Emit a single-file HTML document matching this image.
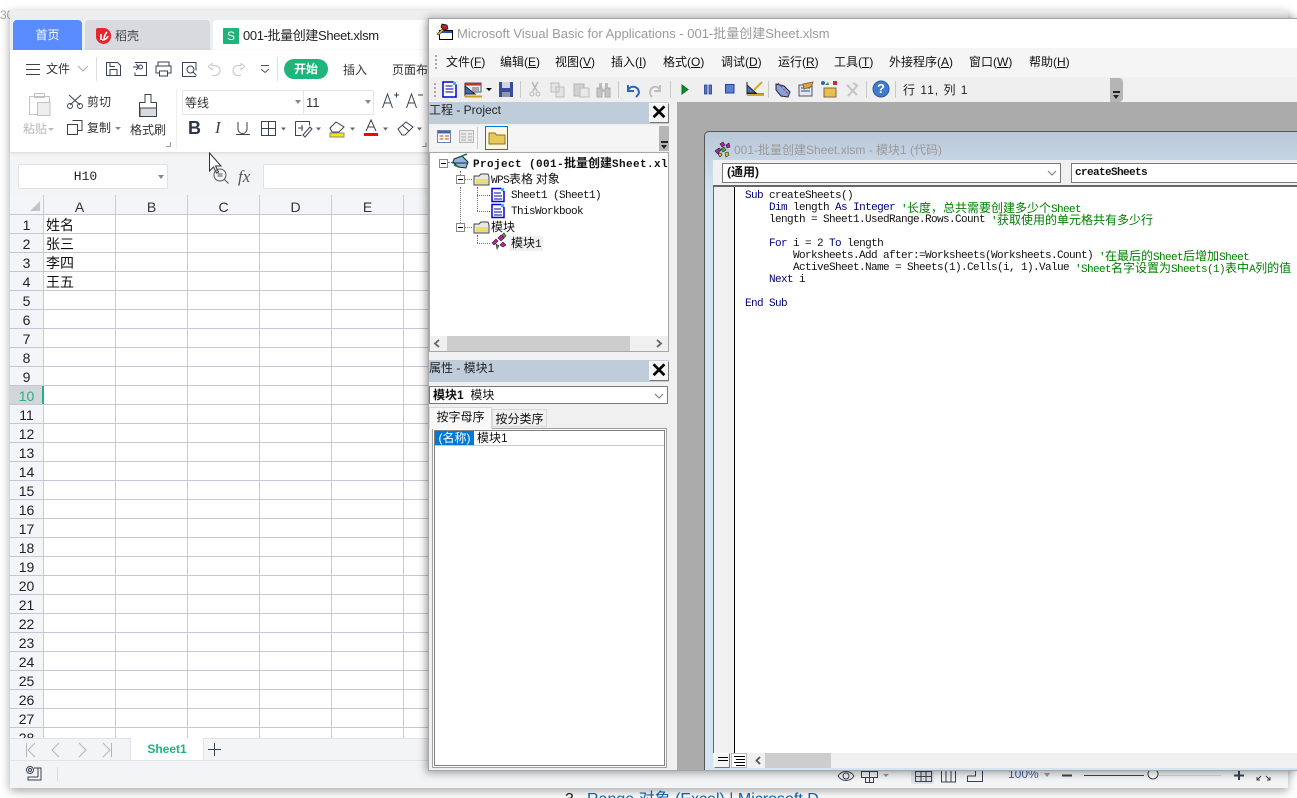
<!DOCTYPE html>
<html><head><meta charset="utf-8"><style>
html,body{margin:0;padding:0;background:#fff;width:1297px;height:798px;overflow:hidden}
body{position:relative;font-family:"Liberation Sans","Noto Sans CJK SC",sans-serif;font-size:12px;color:#222}
.a{position:absolute;white-space:nowrap}
.t{position:absolute;white-space:nowrap;line-height:16px;transform:translateY(-8px)}
svg{position:absolute;overflow:visible}
.rn{position:absolute;left:10px;width:33px;text-align:center;font-size:14px;line-height:21px;color:#222}
.c{position:absolute;left:46px;font-size:14px;line-height:21px;color:#111}
.ch{position:absolute;top:195px;height:19px;width:71px;text-align:center;font-size:14px;line-height:24px;color:#333}
.m{position:absolute;top:54px;line-height:17px;font-size:12px;color:#111;white-space:nowrap}
.m u{text-decoration:underline}
.sep{position:absolute;top:81px;width:1px;height:17px;background:#c8c8c8}
.code{position:absolute;left:745px;font-family:"Liberation Mono","Noto Sans CJK SC",monospace;font-size:11px;letter-spacing:-.6px;line-height:12px;white-space:pre;color:#111}
.code b{font-weight:normal;color:#00007f}
.cm{position:absolute;top:0;color:#008000;letter-spacing:-.6px}
.cm i{font:12px/12px "Noto Sans CJK SC",sans-serif;letter-spacing:0}
.tr{position:absolute;font-family:"Liberation Mono","Noto Sans CJK SC",monospace;font-size:11px;letter-spacing:-.6px;line-height:14px;white-space:nowrap;color:#111}
.tr i{font:12px/14px "Noto Sans CJK SC",sans-serif;letter-spacing:0}
.box{position:absolute;width:7px;height:7px;border:1px solid #888;background:#fff}
.box:after{content:"";position:absolute;left:1px;top:3px;width:5px;height:1px;background:#000}
.dot{position:absolute;border-color:#777;border-style:dotted;border-width:0}
</style></head><body>
<div class="a" style="left:0;top:8px;font-size:12px;color:#aaa">30</div>
<div class="a" style="left:565px;top:791px;font-size:16px;line-height:18px;color:#222">3.</div>
<div class="a" style="left:587px;top:791px;font-size:16px;line-height:18px;color:#0a6ab8">Range 对象 (Excel) | Microsoft D</div>

<!-- WPS window -->
<div class="a" style="left:10px;top:10px;width:1278px;height:778px;background:#f3f4f6;box-shadow:0 3px 9px rgba(0,0,0,.35)"></div>
<div class="a" style="left:10px;top:10px;width:1278px;height:40px;background:#eceef0"></div>
<div class="a" style="left:13px;top:20px;width:69px;height:30px;background:#5b8cff;border-radius:4px 4px 0 0;color:#fff;text-align:center;line-height:30px">首页</div>
<div class="a" style="left:85px;top:20px;width:125px;height:30px;background:#d8dadf;border-radius:4px 4px 0 0"></div>
<div class="a" style="left:96px;top:28px;width:15px;height:16px;background:#e8252f;border-radius:2px 8px 8px 8px"></div>
<svg style="left:96px;top:28px" width="15" height="16"><path d="M5 12V6M8 12C8 8 9 6 11 4M6 12c2 0 5-1 6-4" stroke="#fff" stroke-width="1.6" fill="none"/></svg>
<div class="t" style="left:115px;top:36px;color:#444">稻壳</div>
<div class="a" style="left:213px;top:20px;width:215px;height:30px;background:#fff;border-radius:4px 4px 0 0"></div>
<div class="a" style="left:223px;top:28px;width:16px;height:16px;background:#1fb57a;color:#fff;text-align:center;font-size:12px;line-height:16px;border-radius:1px">S</div>
<div class="t" style="left:243px;top:36px;font-size:13px;color:#222;letter-spacing:-.37px">001-批量创建Sheet.xlsm</div>

<!-- ribbon -->
<div class="a" style="left:10px;top:50px;width:1278px;height:102px;background:#fff;box-shadow:0 1px 3px rgba(0,0,0,.12)"></div>
<svg style="left:0;top:0" width="430" height="150" fill="none" stroke="#3a4250" stroke-width="1">
<path d="M26 64.500h14M26 69.500h14M26 74.500h14"/>
<path d="M78 66l5 5 5-5" stroke="#aaa"/>
<path d="M96.500 57v24M277.500 57v24" stroke="#ddd"/>
<path d="M106.500 62.500h11l3 3v10h-14zM110 75.500v-6h7v6M110 62.500v4h5"/>
<path d="M133 67h5M136 64l3 3-3 3M135 62.500h11.500v13h-11.500v-3"/><circle cx="140.500" cy="67" r="2"/>
<path d="M158 62.500h11v4h-11zM158 66.500h-2v7h3M169 66.500h2v7h-3M159.500 71.500h8v5h-8z" transform="translate(0,-.5)"/>
<path d="M196 76.500h-13.500v-14h13.500v8"/><circle cx="190.500" cy="69.500" r="3.500"/><path d="M193 72l3.500 3.500"/>
<path d="M208 67l4-3v2h3a5 5 0 0 1 0 10h-3M208 67l4 3v-2" stroke="#c4c6c9" transform="translate(0,-.5)"/>
<path d="M245 67l-4-3v2h-3a5 5 0 0 0 0 10h3M245 67l-4 3v-2" stroke="#c4c6c9" transform="translate(0,-.5)"/>
<path d="M261 65.500h8M261 69l4 3.500 4-3.500" stroke="#555"/>
<!-- clipboard -->
<path d="M29.500 96.500h20v9M29.500 96.500v18h8M34.500 93.500h10v4h-10z" stroke="#c0c2c5"/>
<path d="M37.500 102.500h12.500v13h-12.500z" fill="#eee" stroke="#c0c2c5"/>
<!-- scissors -->
<path d="M69 95l11 10M81 95l-11 10"/><circle cx="70" cy="106" r="2.500"/><circle cx="80" cy="106" r="2.500"/>
<!-- copy -->
<path d="M72.500 120.500h9.500v10h-4M67.500 124.500h10v10h-10z"/>
<!-- brush -->
<path d="M145 94.500h6v8h5.500v14h-17v-14h5.500z"/><path d="M140 108h16.500v8.500h-16.500z" fill="#d9dbde" stroke="#3a4250"/>
<path d="M176.500 89v60" stroke="#eee"/>
<path d="M166 146.500h4.500v-4.500M422 146.500h4v-4" stroke="#999"/>
<!-- A+ A- -->
<path d="M382.500 108l5-14 5 14M384.500 103h6M394 95h5M396.500 92.500v5"/>
<path d="M406.500 108l5-14 5 14M408.500 103h6M418 95h5"/>
<!-- U -->
<path d="M238 122v7a4.500 4.500 0 0 0 9 0v-7M236 134.500h14"/>
<!-- border -->
<path d="M261.500 121.500h14v14h-14zM268.500 121.500v14M261.500 128.500h14"/>
<path d="M281 127.500h5l-2.500 3z" fill="#666" stroke="none"/>
<!-- cell format -->
<path d="M295.500 121.500h14v4M295.500 121.500v14h6M298 128h5M302 125v6"/><path d="M303 135l7-8 2 2-7 8z"/>
<path d="M316 127.500h5l-2.500 3z" fill="#666" stroke="none"/>
<!-- fill -->
<path d="M330 128l6-6 8 5-5 5h-7z"/><path d="M330 133h14v4h-14z" fill="#ffe600" stroke="#888"/>
<path d="M350 127.500h5l-2.500 3z" fill="#666" stroke="none"/>
<!-- font colour -->
<path d="M366 131l5-11 5 11M368 127h6"/><path d="M364 133h14v3h-14z" fill="#f00" stroke="none"/>
<path d="M383 127.500h5l-2.500 3z" fill="#666" stroke="none"/>
<!-- eraser -->
<path d="M398 129l8-7 7 5-8 8h-3zM402 125l7 6"/>
<path d="M417 127.500h5l-2.500 3z" fill="#666" stroke="none"/>
</svg>
<div class="t" style="left:46px;top:69px;color:#333">文件</div>
<div class="a" style="left:284px;top:59px;width:44px;height:20px;border-radius:10px;background:#1fb57a;color:#fff;font-weight:bold;text-align:center;line-height:20px">开始</div>
<div class="t" style="left:343px;top:70px;color:#333">插入</div>
<div class="t" style="left:392px;top:70px;color:#333">页面布</div>
<div class="t" style="left:23px;top:129px;color:#b5b7ba">粘贴</div>
<div class="a" style="left:48px;top:128px;border:3px solid transparent;border-top:3px solid #bbb"></div>
<div class="t" style="left:87px;top:102px;color:#333">剪切</div>
<div class="t" style="left:87px;top:128px;color:#333">复制</div>
<div class="a" style="left:115px;top:127px;border:3px solid transparent;border-top:3px solid #888"></div>
<div class="t" style="left:130px;top:130px;color:#333">格式刷</div>
<div class="a" style="left:182px;top:90px;width:190px;height:23px;border:1px solid #e3e4e6;border-radius:2px"></div>
<div class="a" style="left:303px;top:91px;width:1px;height:23px;background:#e3e4e6"></div>
<div class="t" style="left:185px;top:103px;color:#333">等线</div>
<div class="t" style="left:306px;top:103px;color:#333;font-size:13px">11</div>
<div class="a" style="left:295px;top:100px;border:3px solid transparent;border-top:4px solid #888"></div>
<div class="a" style="left:365px;top:100px;border:3px solid transparent;border-top:4px solid #888"></div>
<div class="t" style="left:188px;top:128px;font-size:18px;font-weight:bold;color:#2d3646">B</div>
<div class="t" style="left:215px;top:128px;font-size:17px;font-style:italic;font-family:'Liberation Serif',serif;color:#3a4250">I</div>

<!-- formula bar -->
<div class="a" style="left:18px;top:164px;width:147px;height:23px;background:#fff;border:1px solid #e0e1e4;border-radius:2px;text-align:center;line-height:24px;font-family:'Liberation Mono',monospace;font-size:13px;padding-right:1px;color:#222"><span style="margin-right:14px">H10</span></div>
<div class="a" style="left:158px;top:175px;border:3px solid transparent;border-top:4px solid #888"></div>
<svg style="left:205px;top:148px" width="40" height="40" fill="none" stroke="#555">
<path d="M4.500 5v18l4-4 3 6 2-1-3-6h5.500z" fill="#fff" stroke="#333"/>
<circle cx="15" cy="27" r="6"/><path d="M19.500 31.500l4 4M12.500 26h5M12.500 28h5"/>
</svg>
<div class="t" style="left:238px;top:177px;font:italic 17px/16px 'Liberation Serif',serif;color:#555">fx</div>
<div class="a" style="left:263px;top:164px;width:170px;height:23px;background:#fff;border:1px solid #e0e1e4;border-radius:2px"></div>

<!-- grid -->
<div class="a" style="left:10px;top:195px;width:1278px;height:543px;background:#fff"></div>
<div class="a" style="left:10px;top:195px;width:33px;height:543px;background:#f3f5f8"></div>
<div class="a" style="left:10px;top:195px;width:1278px;height:19px;background:#f3f5f8"></div>
<div class="a" style="left:43px;top:195px;width:1245px;height:543px;background-image:repeating-linear-gradient(to right,#c8cbd8 0,#c8cbd8 1px,transparent 1px,transparent 72px)"></div>
<div class="a" style="left:10px;top:214px;width:1278px;height:524px;background-image:repeating-linear-gradient(to bottom,#c4c7d6 0,#c4c7d6 1px,transparent 1px,transparent 19px)"></div>
<div class="a" style="left:10px;top:386px;width:33px;height:18px;background:#d3d5da"></div>
<div class="a" style="left:42px;top:386px;width:2px;height:18px;background:#1fb57a"></div>
<svg style="left:30px;top:201px" width="11" height="11"><path d="M10 0v10H0z" fill="#c3c5c9"/></svg>
<div class="ch" style="left:44px">A</div><div class="ch" style="left:116px">B</div><div class="ch" style="left:188px">C</div><div class="ch" style="left:260px">D</div><div class="ch" style="left:332px">E</div>
<div class="rn" style="top:215px">1</div><div class="rn" style="top:234px">2</div><div class="rn" style="top:253px">3</div><div class="rn" style="top:272px">4</div><div class="rn" style="top:291px">5</div><div class="rn" style="top:310px">6</div><div class="rn" style="top:329px">7</div><div class="rn" style="top:348px">8</div><div class="rn" style="top:367px">9</div><div class="rn" style="top:386px;color:#1fb57a">10</div><div class="rn" style="top:405px">11</div><div class="rn" style="top:424px">12</div><div class="rn" style="top:443px">13</div><div class="rn" style="top:462px">14</div><div class="rn" style="top:481px">15</div><div class="rn" style="top:500px">16</div><div class="rn" style="top:519px">17</div><div class="rn" style="top:538px">18</div><div class="rn" style="top:557px">19</div><div class="rn" style="top:576px">20</div><div class="rn" style="top:595px">21</div><div class="rn" style="top:614px">22</div><div class="rn" style="top:633px">23</div><div class="rn" style="top:652px">24</div><div class="rn" style="top:671px">25</div><div class="rn" style="top:690px">26</div><div class="rn" style="top:709px">27</div><div class="rn" style="top:728px;height:10px;overflow:hidden">28</div>
<div class="c" style="top:215px">姓名</div><div class="c" style="top:234px">张三</div><div class="c" style="top:253px">李四</div><div class="c" style="top:272px">王五</div>

<!-- sheet tabs -->
<div class="a" style="left:10px;top:738px;width:1278px;height:50px;background:#f3f4f6"></div>
<div class="a" style="left:10px;top:738px;width:1278px;height:1px;background:#e2e3e6"></div>
<div class="a" style="left:10px;top:760px;width:1278px;height:1px;background:#e2e3e6"></div>
<div class="a" style="left:130px;top:738px;width:72px;height:22px;background:#fff;border-left:1px solid #e2e3e6;border-right:1px solid #e2e3e6;color:#1fb57a;font-weight:bold;text-align:center;line-height:23px">Sheet1</div>
<svg style="left:0;top:730px" width="240" height="60" fill="none" stroke="#b4b6ba">
<path d="M26.500 13v14M35 13l-7 7 7 7M59 13l-7 7 7 7M79 13l7 7-7 7M103 13l7 7-7 7M111.500 13v14"/>
<path d="M208 19.500h13M214.500 13v13" stroke="#3a4250"/>
<circle cx="30" cy="40" r="3.500" stroke="#3a4250"/><circle cx="30" cy="40" r="1.500" stroke="#3a4250"/>
<path d="M34 38h7v12H28v-3h10M38 38v9" stroke="#3a4250"/>
<path d="M57.500 37v14" stroke="#ddd"/>
</svg>

<!-- right status pieces -->
<svg style="left:830px;top:768px" width="450" height="22" fill="none" stroke="#3a4250">
<rect x="81" y="-4" width="23" height="20" rx="2" fill="#dde0e6" stroke="none"/>
<path d="M8 8c4-6 12-6 16 0c-4 6-12 6-16 0z"/><circle cx="16" cy="8" r="3"/>
<path d="M31.500 3.500h16v6h-4v5h-8v-5h-4zM39.500 3.500v11M31.500 9.500h16"/>
<path d="M53 6h6l-3 3z" fill="#999" stroke="none"/>
<path d="M85.500 3.500h16v10h-16zM85.500 8.500h16M91 3v10M96 3v10"/>
<path d="M111.500 3v11h14V3M116 3v11M121 3v11"/>
<path d="M137.500 8v5.500h15V3M137.500 8h8V3"/>
<path d="M232 7.500h10" stroke-width="2"/>
<path d="M254 7.500h60" stroke="#3a4250"/><path d="M329 7.500h62" stroke="#d5d6d9"/>
<circle cx="323" cy="6" r="5" fill="#fff"/>
<path d="M404 7.500h10M409 3v9" stroke-width="2"/>
<path d="M427 12l4-4M427 9v3h3M440 12l-4-4M440 9v3h-3"/>
</svg>
<div class="a" style="left:1008px;top:768px;line-height:13px;font-size:12px;color:#3b5f98;width:32px;height:13px;overflow:hidden">100%</div>
<div class="a" style="left:1044px;top:773px;border:3px solid transparent;border-top:4px solid #999"></div>

<!-- VBA window -->
<div class="a" style="left:428px;top:18px;width:869px;height:753px;background:#f0f0f0;border:1px solid #a6a6a6;border-right:0;box-sizing:border-box;box-shadow:-2px 2px 8px rgba(0,0,0,.35),0 -4px 6px rgba(0,0,0,.08)"></div>
<div class="a" style="left:429px;top:19px;width:868px;height:29px;background:#fff"></div>
<svg style="left:436px;top:23px" width="18" height="18"><path d="M3.500 7.500h13v9h-13z" fill="#fff" stroke="#000"/><path d="M4 8h12v2H4z" fill="#1458c8"/><path d="M6 1l5 1 1 4-4 1-3-3z" fill="#c02020" stroke="#000" stroke-width=".7"/><path d="M1 11l5-5 2 1-5 5z" fill="#e8c020" stroke="#333" stroke-width=".6"/></svg>
<div class="t" style="left:457px;top:34px;font-size:13px;color:#9a9a9a">Microsoft Visual Basic for Applications - 001-批量创建Sheet.xlsm</div>
<div class="a" style="left:429px;top:48px;width:868px;height:29px;background:#f5f5f5"></div>
<div class="a" style="left:435px;top:55px;width:2px;height:14px;background-image:repeating-linear-gradient(to bottom,#aaa 0,#aaa 2px,transparent 2px,transparent 4px)"></div>
<div class="m" style="left:446px">文件(<u>F</u>)</div><div class="m" style="left:500px">编辑(<u>E</u>)</div><div class="m" style="left:555px">视图(<u>V</u>)</div><div class="m" style="left:611px">插入(<u>I</u>)</div><div class="m" style="left:663px">格式(<u>O</u>)</div><div class="m" style="left:721px">调试(<u>D</u>)</div><div class="m" style="left:778px">运行(<u>R</u>)</div><div class="m" style="left:834px">工具(<u>T</u>)</div><div class="m" style="left:889px">外接程序(<u>A</u>)</div><div class="m" style="left:969px">窗口(<u>W</u>)</div><div class="m" style="left:1029px">帮助(<u>H</u>)</div>

<!-- VBA toolbar -->
<div class="a" style="left:431px;top:78px;width:692px;height:24px;background:#efefef;border-radius:0 4px 4px 0"></div>
<div class="a" style="left:1110px;top:78px;width:13px;height:24px;background:#b5b5b5;border-radius:0 4px 4px 0"></div>
<div class="a" style="left:1113px;top:91px;width:7px;height:2px;background:#222"></div>
<div class="a" style="left:1113px;top:95px;border:3.500px solid transparent;border-top:4px solid #222"></div>
<div class="a" style="left:434px;top:83px;width:2px;height:14px;background-image:repeating-linear-gradient(to bottom,#aaa 0,#aaa 2px,transparent 2px,transparent 4px)"></div>
<div class="sep" style="left:520px"></div><div class="sep" style="left:618px"></div><div class="sep" style="left:670px"></div><div class="sep" style="left:768px"></div><div class="sep" style="left:866px"></div><div class="sep" style="left:895px"></div>
<svg style="left:0;top:0" width="900" height="110" fill="none">
<path d="M443 82h10l3 3v12h-13z" fill="#fff" stroke="#0000e0" stroke-width="1.500"/><path d="M445.500 86h7M445.500 89h8M445.500 92h8" stroke="#0000a0"/><path d="M453 82h3v3h-3z" fill="#20c0e0"/>
<path d="M465 83h16v9h-16z" fill="#e8e8e8" stroke="#556"/><path d="M465 84.500h16" stroke="#c03020" stroke-width="2"/><path d="M465 84v12h17" stroke="#334"/><path d="M465 86l10 8h-10z" fill="#3a6ab0" stroke="#223"/><path d="M472 88h7M472 90h7" stroke="#667"/><path d="M465 96.500h17" stroke="#c8a020" stroke-width="2"/>
<path d="M486 88h6l-3 3z" fill="#000"/>
<path d="M499 82h14v15h-14z" fill="#3b4a9a"/><path d="M502 82h8v6h-8z" fill="#d0d4e8"/><path d="M502 92h8v5h-8z" fill="#9098a8"/>
<path d="M532 82l5 9M538 82l-5 9" stroke="#b8b8b8" stroke-width="1.500"/><circle cx="532" cy="94" r="2" stroke="#b8b8b8"/><circle cx="538" cy="94" r="2" stroke="#b8b8b8"/>
<path d="M551 83h8v9h-8zM556 87h8v10h-8z" fill="#e4e4e4" stroke="#bcbcbc"/>
<path d="M574 84h10v12h-10z" fill="#d0d0d0" stroke="#b4b4b4"/><path d="M580 88h9v9h-9z" fill="#e8e8e8" stroke="#bcbcbc"/>
<path d="M597 88h5v9h-5zM605 88h5v9h-5z" fill="#c4c4c4" stroke="#aaa"/><path d="M599 83h3v5h-3zM605 83h3v5h-3zM602 89h3v3h-3z" fill="#bbb"/>
<path d="M628 85v6h6M628 90c3-5 10-4 11 2c0 2-2 4-3 5" stroke="#2a66b8" stroke-width="2"/>
<path d="M660 85v6h-6M660 90c-3-5-9-4-10 2c0 2 1 4 2 5" stroke="#c0c0c0" stroke-width="2"/>
<path d="M682 85l6 4.500-6 4.500z" fill="#0c8c2c" stroke="#0a6a20"/>
<path d="M704.500 85h2.500v9h-2.500zM709 85h2.500v9H709z" fill="#5878c8" stroke="#1c3c8c" stroke-width=".8"/>
<path d="M725.500 84.500h8.500v8.500h-8.500z" fill="#5a80d0" stroke="#2040a0"/>
<path d="M747 82v12h17" stroke="#223"/><path d="M747 85l9 8h-9z" fill="#4a70b8" stroke="#223"/><path d="M747 95h17" stroke="#d8a820" stroke-width="2"/><path d="M754 90l8-8" stroke="#d8a820" stroke-width="2"/>
<path d="M776 84l8 2 6 6-2 5-7-1-5-6z" fill="#8aa0d8" stroke="#224"/><path d="M778 83l10 11" stroke="#c03030" stroke-dasharray="2 2"/>
<path d="M799 85h13v11h-13z" fill="#dfe6f0" stroke="#556"/><path d="M801 88h9M801 91h9" stroke="#447"/><path d="M803 84l10-2-2 5-7 2z" fill="#d8a840" stroke="#864"/>
<path d="M824 88h12v9h-12z" fill="#e8c050" stroke="#864"/><circle cx="823" cy="83" r="2" fill="#3060c0"/><path d="M833 81h4v4h-4z" fill="#c03030"/><path d="M828 82l-3 3h4z" fill="#30a030"/>
<path d="M847 85l10 10M848 96l9-10M853 83l5 3" stroke="#c4c4c4" stroke-width="2"/>
<circle cx="881" cy="89" r="8" fill="#3f7ccb" stroke="#2a5ca0"/>
</svg>
<div class="a" style="left:873px;top:81px;width:16px;text-align:center;color:#fff;font-weight:bold;font-size:13px;line-height:16px">?</div>
<div class="t" style="left:903px;top:90px;color:#222;letter-spacing:1px">行 11, 列 1</div>

<!-- project panel -->
<div class="a" style="left:429px;top:102px;width:240px;height:22px;background:#bfcddb"></div>
<div class="a" style="left:429px;top:102px;line-height:17px;color:#222;font-size:12px">工程 - Project</div>
<div class="a" style="left:649px;top:103px;width:18px;height:18px;background:#f4f4f4;border:1px solid #8a8a8a;border-color:#fff #777 #777 #fff;font:bold 20px/18px 'Liberation Sans';text-align:center;color:#000">✕</div>
<div class="a" style="left:431px;top:126px;width:238px;height:25px;background:#f5f5f5;border-radius:4px 0 0 4px"></div>
<div class="a" style="left:659px;top:126px;width:10px;height:25px;background:#b5b5b5"></div>
<div class="a" style="left:661px;top:141px;width:7px;height:2px;background:#222"></div>
<div class="a" style="left:661px;top:145px;border:3.500px solid transparent;border-top:4px solid #222"></div>
<svg style="left:430px;top:124px" width="90" height="28" fill="none">
<path d="M7.500 6.500h13v12h-13z" fill="#fff" stroke="#6a84b4"/><path d="M8 7h12v2.500H8z" fill="#4068b0"/><path d="M9.500 12h4M15 12h4M9.500 15h4M15 15h4" stroke="#c04020"/>
<path d="M29.500 6.500h14v12h-14z" fill="#eaeaea" stroke="#b8b8b8"/><path d="M31 10h5M31 13h5M31 16h5M38 10h4M38 13h4M38 16h4" stroke="#aaa"/>
<path d="M47.500 3v22" stroke="#ccc"/>
<rect x="55.500" y="2.500" width="22" height="23" fill="#fff7e0" stroke="#0078d7"/>
<path d="M59 9h6l1.500 2H75v9H59z" fill="#e8c858" stroke="#8a7030"/>
</svg>
<div class="a" style="left:429px;top:152px;width:240px;height:200px;background:#fff;border:1px solid #a8a8a8;box-sizing:border-box"></div>
<!-- tree -->
<div class="a" style="left:430px;top:153px;width:238px;height:183px;overflow:hidden">
<div class="dot" style="left:18px;top:9px;width:4px;border-top-width:1px"></div>
<div class="dot" style="left:30px;top:18px;height:8px;border-left-width:1px"></div>
<div class="dot" style="left:30px;top:34px;height:40px;border-left-width:1px"></div>
<div class="dot" style="left:34px;top:26px;width:8px;border-top-width:1px"></div>
<div class="dot" style="left:34px;top:74px;width:8px;border-top-width:1px"></div>
<div class="dot" style="left:47px;top:34px;height:24px;border-left-width:1px"></div>
<div class="dot" style="left:47px;top:42px;width:13px;border-top-width:1px"></div>
<div class="dot" style="left:47px;top:58px;width:13px;border-top-width:1px"></div>
<div class="dot" style="left:47px;top:82px;height:8px;border-left-width:1px"></div>
<div class="dot" style="left:47px;top:90px;width:13px;border-top-width:1px"></div>
<div class="box" style="left:9px;top:6px"></div>
<div class="box" style="left:26px;top:22px"></div>
<div class="box" style="left:26px;top:70px"></div>
<svg style="left:0;top:0" width="120" height="100" fill="none">
<path d="M24 6l8-3 6 6-2 6-8-1-5-5z" fill="#8fb8e0" stroke="#223"/><path d="M24 12l5 2M32 3l5-2" stroke="#108030" stroke-width="1.500"/><path d="M22 10h15" stroke="#223"/>
<path d="M44 23h5l2-2h7l1 3v8H44z" fill="#e8e8e8" stroke="#444"/><path d="M46 26h12v5H46z" fill="#e6e070"/>
<path d="M44 71h5l2-2h7l1 3v8H44z" fill="#e8e8e8" stroke="#444"/><path d="M46 74h12v5H46z" fill="#e6e070"/>
<path d="M62 35.500h9l3 3v10H62zM62 51.500h9l3 3v10H62z" fill="#fff" stroke="#0000e0" stroke-width="1.500"/>
<path d="M64 40h7M64 43h8M64 46h8M64 56h7M64 59h8M64 62h8" stroke="#0000a0"/><path d="M71 35h3v3h-3zM71 51h3v3h-3z" fill="#20c0e0"/>
<path d="M62 90l4-4 2 2-4 4zM68 85l3-3 3 3-3 3zM70 92l3-3 3 3-3 2z" fill="#c020a0" stroke="#222" stroke-width=".6"/><path d="M66 91l3 2-2 3zM72 82l2-2 2 3-2 2z" fill="#40b040" stroke="#222" stroke-width=".6"/>
</svg>
<div class="a" style="left:79px;top:83px;width:34px;height:15px;background:#f0f0f0"></div>
<div class="tr" style="left:43px;top:3px;font-weight:bold;letter-spacing:.4px;font-size:11px">Project (001-<i style="font-weight:bold">批量创建</i>Sheet.xlsm)</div>
<div class="tr" style="left:61px;top:19px">WPS<i>表格 对象</i></div>
<div class="tr" style="left:81px;top:36px">Sheet1 (Sheet1)</div>
<div class="tr" style="left:81px;top:52px">ThisWorkbook</div>
<div class="tr" style="left:61px;top:67px"><i>模块</i></div>
<div class="tr" style="left:81px;top:83px"><i>模块</i>1</div>
</div>
<!-- project scroll -->
<div class="a" style="left:430px;top:336px;width:238px;height:15px;background:#f0f0f0"></div>
<div class="a" style="left:447px;top:336px;width:183px;height:15px;background:#cdcdcd"></div>
<svg style="left:430px;top:336px" width="238" height="15" fill="none" stroke="#606060" stroke-width="1.800"><path d="M9 4l-4 3.500 4 3.500M227 4l4 3.500-4 3.500"/></svg>

<!-- properties panel -->
<div class="a" style="left:429px;top:360px;width:240px;height:22px;background:#bfcddb"></div>
<div class="a" style="left:429px;top:360px;line-height:17px;color:#222;font-size:12px">属性 - 模块1</div>
<div class="a" style="left:649px;top:361px;width:18px;height:18px;background:#f4f4f4;border:1px solid #8a8a8a;border-color:#fff #777 #777 #fff;font:bold 20px/18px 'Liberation Sans';text-align:center;color:#000">✕</div>
<div class="a" style="left:429px;top:386px;width:239px;height:18px;background:#fff;border:1px solid #7a7a7a;box-sizing:border-box;line-height:16px;padding-left:3px;color:#111"><b>模块1</b>&nbsp; 模块</div>
<svg style="left:654px;top:393px" width="11" height="7" fill="none" stroke="#777"><path d="M1 1l4 4 4-4"/></svg>
<div class="a" style="left:492px;top:409px;width:55px;height:18px;background:#f0f0f0;border:1px solid #d8d8d8;box-sizing:border-box;line-height:18px;text-align:center;color:#111">按分类序</div>
<div class="a" style="left:429px;top:407px;width:63px;height:22px;background:#f8f8f8;border:1px solid #d8d8d8;border-bottom:0;box-sizing:border-box;line-height:19px;text-align:center;color:#111;z-index:1">按字母序</div>
<div class="a" style="left:432px;top:428px;width:235px;height:340px;background:#fff;border:1px solid #a0a0a0;box-sizing:border-box"></div>
<div class="a" style="left:434px;top:430px;width:231px;height:336px;border:1px solid #808080;box-sizing:border-box"></div>
<div class="a" style="left:435px;top:431px;width:39px;height:14px;background:#0078d7;color:#fff;line-height:14px;text-align:center">(名称)</div>
<div class="a" style="left:477px;top:431px;line-height:14px;color:#111">模块1</div>
<div class="a" style="left:435px;top:445px;width:229px;height:1px;background:#c8c8c8"></div>

<!-- MDI -->
<div class="a" style="left:677px;top:102px;width:620px;height:668px;background:#ababab"></div>
<div class="a" style="left:704px;top:131px;width:593px;height:639px;background:linear-gradient(#b9c8d8,#d5e4f2 60px);border:1px solid #555;border-right:0;border-bottom:0;border-radius:5px 0 0 0;box-sizing:border-box"></div>
<svg style="left:714px;top:141px" width="18" height="18"><path d="M1 10l4-3 2 2-3 4zM6 3l3-2 2 3-3 2zM12 4l3-2 1 4-3 1z" fill="#b020b0" stroke="#222" stroke-width=".6"/><path d="M7 8l3-2 2 3-3 2z" fill="#40b040" stroke="#222" stroke-width=".6"/><path d="M11 12l3-1 1 3-3 2zM4 13l3-1 1 2-2 2z" fill="#e0c020" stroke="#222" stroke-width=".6"/></svg>
<div class="t" style="left:734px;top:150px;color:#9a9a9a">001-批量创建Sheet.xlsm - 模块1 (代码)</div>
<div class="a" style="left:713px;top:160px;width:584px;height:608px;background:#f0f0f0"></div>
<div class="a" style="left:722px;top:163px;width:339px;height:20px;background:#fff;border:1px solid #7a7a7a;box-sizing:border-box;line-height:17px;padding-left:4px;font-weight:bold;color:#111">(通用)</div>
<svg style="left:1047px;top:170px" width="11" height="7" fill="none" stroke="#777"><path d="M1 1l4 4 4-4"/></svg>
<div class="a" style="left:1071px;top:163px;width:230px;height:20px;background:#fff;border:1px solid #7a7a7a;box-sizing:border-box;padding-left:3px;font:bold 11px/19px 'Liberation Mono',monospace;letter-spacing:-.6px;color:#111">createSheets</div>
<div class="a" style="left:713px;top:185px;width:584px;height:568px;background:#fff;border-top:2px solid #666;box-sizing:border-box"></div>
<div class="a" style="left:713px;top:187px;width:1px;height:566px;background:#666"></div>
<div class="a" style="left:714px;top:187px;width:20px;height:566px;background:#f0f0f0"></div>
<div class="a" style="left:734px;top:187px;width:1px;height:566px;background:#000"></div>
<div class="code" style="top:190px"><b>Sub</b> createSheets()</div>
<div class="code" style="top:202px">    <b>Dim</b> length <b>As</b> <b>Integer</b> <span class="cm" style="left:156px">'<i>长度，总共需要创建多少个</i>Sheet</span></div>
<div class="code" style="top:214px">    length = Sheet1.UsedRange.Rows.Count <span class="cm" style="left:246px">'<i>获取使用的单元格共有多少行</i></span></div>
<div class="code" style="top:238px">    <b>For</b> i = 2 <b>To</b> length</div>
<div class="code" style="top:250px">        Worksheets.Add after:=Worksheets(Worksheets.Count) <span class="cm" style="left:354px">'<i>在最后的</i>Sheet<i>后增加</i>Sheet</span></div>
<div class="code" style="top:262px">        ActiveSheet.Name = Sheets(1).Cells(i, 1).Value <span class="cm" style="left:330px">'Sheet<i>名字设置为</i>Sheets(1)<i>表中</i>A<i>列的值</i></span></div>
<div class="code" style="top:274px">    <b>Next</b> i</div>
<div class="code" style="top:298px"><b>End</b> <b>Sub</b></div>
<div class="a" style="left:713px;top:753px;width:584px;height:15px;background:#f0f0f0"></div>
<div class="a" style="left:714px;top:753px;width:16px;height:15px;background:#f4f4f4;border:1px solid #777;border-top-color:#fff;border-left-color:#fff;box-sizing:border-box"></div>
<div class="a" style="left:731px;top:753px;width:16px;height:15px;background:#fff;border:1px solid #bbb;box-sizing:border-box"></div>
<svg style="left:713px;top:753px" width="60" height="15" fill="none" stroke="#000"><path d="M5 4.500h10M5 7.500h10M21 3.500h11M23 6.500h9M21 9.500h11M23 12.500h9"/><path d="M47 4l-3.500 3.500L47 11" stroke="#555" stroke-width="1.800"/></svg>
<div class="a" style="left:765px;top:753px;width:66px;height:15px;background:#cdcdcd"></div>
<div class="a" style="left:428px;top:770px;width:869px;height:1px;background:#a6a6a6"></div>
</body></html>
